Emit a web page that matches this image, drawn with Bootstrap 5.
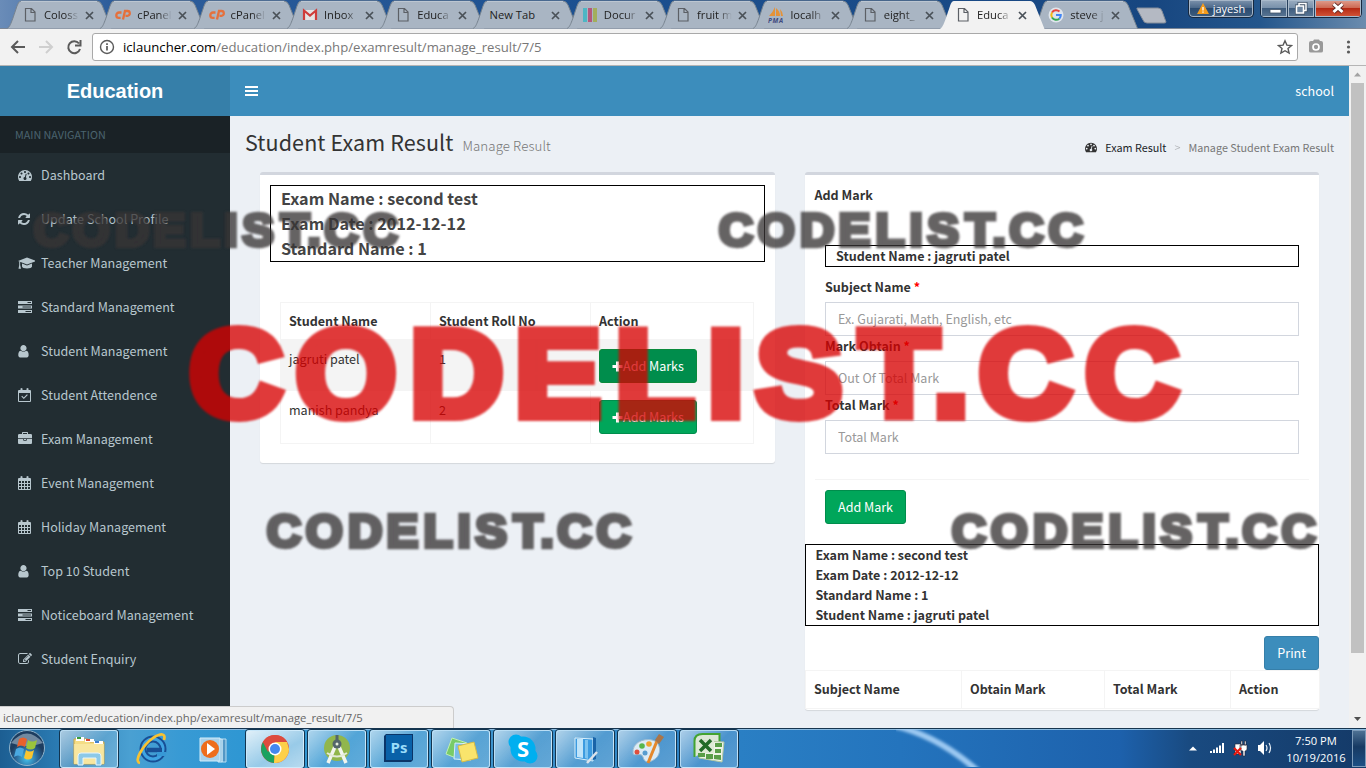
<!DOCTYPE html>
<html lang="en">
<head>
<meta charset="utf-8">
<title>Education</title>
<link href="https://cdn.jsdelivr.net/npm/bootstrap@5.3.0/dist/css/bootstrap.min.css" rel="stylesheet">
<style>
body{width:1366px;height:768px;overflow:hidden;font-family:"Noto Sans CJK SC","Open Sans",sans-serif;font-size:12.55px;line-height:20px;color:#333;background:#ecf0f5}
.ui{font-family:"Open Sans","Noto Sans",sans-serif}
svg{display:block;flex:none}
/* browser tabs */
.tabstrip{height:29px;padding-left:7px;background:linear-gradient(90deg,#6a8cb8 0,#2d5d9b 110px,#1c5090 600px,#174680 1150px,#24568c 1260px,#6b8cae 1366px);box-shadow:inset 0 -1px #7b8594}
.tab{width:93.3px;height:29px;flex:none;font-size:11.2px;color:#222}
.tab>.shape{position:absolute;left:0;top:0;width:106px;height:29px}
.tab .fav{width:16px;height:16px;margin-left:15px;margin-top:1px;z-index:1}
.tab .lbl{width:35px;margin-left:6px;white-space:nowrap;overflow:hidden;z-index:1;-webkit-mask-image:linear-gradient(90deg,#000 60%,transparent)}
.tab .x{margin-left:6px;margin-top:1px;z-index:1}
.tab.wide .lbl{width:52px;margin-left:16px;-webkit-mask-image:none}
.tab.wide .x{margin-left:10px}
.tab.on{z-index:3}
.user-pill{width:66px;height:18px;left:1188px;top:0;border:1px solid #16283f;border-top:0;border-radius:0 0 5px 5px;background:linear-gradient(#7d93ad,#4a6788 48%,#2b4b70 50%,#3d5c7e);box-shadow:inset 0 0 0 1px #a6b6c8;color:#fff;font-size:11px;line-height:17px}
.winbtns{left:1260px;top:0;width:102px;height:18px;border:1px solid #16283f;border-top:0;border-radius:0 0 5px 5px;overflow:hidden;box-shadow:inset 0 0 0 1px #a6b6c8}
.winbtns div{background:linear-gradient(#9aacc0,#7790aa 48%,#3f5d7e 50%,#5a7694);width:27px;border-right:1px solid #26405e;box-shadow:inset 0 0 0 1px #a9bacb}
.winbtns .close-w{width:48px;background:linear-gradient(#e0a090,#cd6a54 45%,#b52a14 50%,#d4573a)}
.toolbar{height:37px;background:#f2f2f2;border-bottom:1px solid #b5b5b5}
.omni{width:1206px;height:28px;margin-left:10px;border:1px solid #a9a9a9;border-radius:3px;background:#fff;font-size:13.15px;color:#777;padding-left:6px}
/* page */
.viewport{height:662px}
.side{width:230px;background:#222d32}
.brand{height:50px;background:#367fa9;color:#fff;font:bold 20px "Liberation Sans",Arial,sans-serif;line-height:50px}
.navhead{height:37px;padding-left:15px;background:#1a2226;color:#4b646f;font-size:10.75px;line-height:38px}
.side a{height:44px;padding-left:18px;color:#b8c7ce;text-decoration:none;letter-spacing:.02px}
.side a svg{width:17px;margin-right:6px;fill:#b8c7ce}
.content{width:1119px;background:#ecf0f5}
.topbar{height:50px;background:#3c8dbc;color:#fff;padding:0 15px 0 15px}
.pagehead{height:56px;padding:0 15px 0 15px}
.pagehead h1{font-size:21.5px;line-height:24px;font-weight:400;letter-spacing:.1px}
.pagehead h1 small{font-size:13.3px;font-weight:300;color:#777;padding-left:4px}
.crumb{font-size:10.8px;color:#777;padding-top:6px}
.panel{background:#fff;border-top:3px solid #d2d6de;border-radius:3px;box-shadow:0 1px 1px rgba(0,0,0,.1)}
.p-left{width:515px;height:291px;margin-left:30px;padding:10px 10px}
.p-right{width:514px;height:538px;margin-left:30px}
.framed{border:1px solid #000;font-weight:700;padding-left:10px}
.grid-t{border-collapse:collapse;table-layout:fixed;margin:0}
.grid-t td,.grid-t th{border:1px solid #f4f4f4;padding:8px;line-height:20px;vertical-align:top}
.semi{font-weight:700}
.btn-flat2{height:34px;border-radius:3px;padding:0 12px;font-size:12.55px;line-height:20px;color:#fff;--bs-btn-color:#fff}
.gbtn{background:#00a65a;border-color:#008d4c}
.gbtn.hov{background:#008d4c;border-color:#0a8a3c}
.pbtn{background:#3c8dbc;border-color:#367fa9}
.fld{height:34px;border:1px solid #d2d6de;border-radius:0;padding:5px 12px 7px;font-size:12.5px;line-height:20px}
.fld::placeholder{color:#999}
.lab{height:25px;line-height:20px}
.star{color:red}
.sbar{width:17px;background:#f1f1f1}
.lead-box{height:77px;font-size:16.2px;line-height:25px;color:#444}
.list-t{width:474px;margin:40px 0 0 10px}
.c1{width:150px}.c2{width:160px}.c3{width:163px}
.r0{height:37px}.r1{height:51px;background:#f4f4f4}.r2{height:52px}
.list-t td{padding-top:9px}
.list-t td.bc{padding:9px 8px 8px}
.list-t .r1 td,.list-t .r2 td{border-top:0;border-bottom:0}.list-t .r2 td{border-bottom:1px solid #f4f4f4}
.amark{padding:10px 0 0 9.5px}
.formpart{padding:40px 20px 0 20px}
.one{height:22px;line-height:20px;margin-bottom:10px}
.foot{margin:25px 10px 0;border-top:1px solid #f4f4f4;padding:10px 10px 0;height:65px}
.four{height:82px;line-height:20px;padding-left:9.5px}
.prt{margin-top:10px}
.res-t{width:514px}
.res-t tr{height:38px}
.d1{width:156px}.d2{width:143px}.d3{width:126px}.d4{width:89px}
.status{left:0;top:706px;width:454px;height:22px;background:#f1f1f1;border:1px solid #ccc;border-left:0;border-bottom:0;border-radius:0 4px 0 0;color:#666;font-size:11.3px;line-height:22px;padding-left:3px;z-index:2}
/* taskbar */
.taskbar{height:40px;background:linear-gradient(90deg,#1c5e92 0,#2b7cb4 60px,#4aa0d2 130px,#389ad4 180px,#2f97d3 240px,#3c93cd 500px,#2a7fc4 740px,#2474bd 900px,#1d61ac 1120px,#194a80 1190px,#143a68 1366px);border-top:1px solid #17354f;box-shadow:inset 0 1px #8bbbe0;z-index:2}
.tb{width:58px;height:38px;margin:1px 4px 0 0;flex:none}
.tb.run{border:1px solid rgba(215,240,255,.75);border-radius:3px;background:linear-gradient(135deg,rgba(255,255,255,.6),rgba(255,255,255,.15) 55%,rgba(255,255,255,.22));box-shadow:0 0 0 1px #12344f}
.tb.act{background:linear-gradient(150deg,rgba(255,255,255,.85),rgba(255,255,255,.5) 60%,rgba(255,255,255,.65))}
.clock{left:1281px;top:3px;color:#fff;font-size:11.2px;line-height:17px;width:70px}
.tray{left:1180px}
.peek{right:0;top:1px;width:14px;height:37px;border:1px solid #7d9bb9;background:linear-gradient(#4e7193,#173a63 45%,#1d4f84)}
.marks{left:0;top:0;z-index:9;pointer-events:none}
</style>
</head>
<body>
<svg width="0" height="0" class="position-absolute">
<defs>
<symbol id="page" viewBox="0 0 16 16"><path d="M3.5 1.5h6l3.5 3.5v9H3.500z M9 1.500v4h4" fill="none" stroke="#5c6066" stroke-width="1.2"/></symbol>
<symbol id="cp" viewBox="0 0 16 16"><path d="M6.500 5.500H4a2.600 2.600 0 0 0 0 5.400h1.600M8 12.500L10 4h2.300a2.300 2.300 0 0 1 .2 4.800H10.500" fill="none" stroke="#e5703c" stroke-width="2.300"/></symbol>
<symbol id="cross" viewBox="0 0 9 9"><path d="M1 1l7 7M8 1L1 8" stroke="#4a5158" stroke-width="1.700"/></symbol>
<symbol id="tabshape" viewBox="0 0 106 29"><path d="M0 28.500C3 27 4 24 10 6Q11.500 1 14 1H90Q93 1 95 5L104.500 28.500" fill="#a9b5c3" stroke="#77838f"/><path d="M14 1.500H90" stroke="#bcc6d1"/></symbol>
<symbol id="tabon" viewBox="0 0 106 29"><path d="M0 29C3 27 4 24 10 6Q11.500 1 14 1H90Q93 1 95 5L104.500 29" fill="#f2f2f2"/></symbol>
<symbol id="tach" viewBox="0 0 1792 1792"><path d="M384 1152q0-53-37.500-90.500t-90.500-37.500-90.500 37.500-37.500 90.500 37.500 90.500 90.500 37.500 90.500-37.500 37.500-90.500zm192-448q0-53-37.500-90.500t-90.500-37.500-90.500 37.500-37.500 90.500 37.500 90.500 90.500 37.500 90.500-37.500 37.500-90.500zm428 481l101-382q6-26-7.500-48.500t-38.500-29.500-48 6.500-30 39.500l-101 382q-60 5-107 43.500t-63 98.500q-20 77 20 146t117 89 146-20 89-117q16-60-6-117t-72-91zm660-33q0-53-37.500-90.500t-90.500-37.500-90.500 37.500-37.500 90.500 37.500 90.500 90.500 37.500 90.500-37.500 37.500-90.500zm-640-640q0-53-37.500-90.500t-90.500-37.500-90.500 37.500-37.500 90.500 37.500 90.500 90.500 37.500 90.500-37.500 37.500-90.500zm448 192q0-53-37.500-90.500t-90.500-37.500-90.500 37.500-37.500 90.500 37.500 90.500 90.500 37.500 90.500-37.500 37.500-90.500zm320 448q0 261-141 483-19 29-54 29h-1402q-35 0-54-29-141-221-141-483 0-182 71-348t191-286 286-191 348-71 348 71 286 191 191 286 71 348z"/></symbol>
<symbol id="refresh" viewBox="0 0 1792 1792"><path d="M1639 1056q0 5-1 7-64 268-268 434.500t-478 166.500q-146 0-282.500-55t-243.500-157l-129 129q-19 19-45 19t-45-19-19-45v-448q0-26 19-45t45-19h448q26 0 45 19t19 45-19 45l-137 137q71 66 161 102t187 36q134 0 250-65t186-179q11-17 53-117 8-23 30-23h192q13 0 22.500 9.500t9.500 22.500zm25-800v448q0 26-19 45t-45 19h-448q-26 0-45-19t-19-45 19-45l138-138q-148-137-349-137-134 0-250 65t-186 179q-11 17-53 117-8 23-30 23h-199q-13 0-22.500-9.500t-9.500-22.500v-7q65-268 270-434.500t480-166.500q146 0 284 55.500t245 156.500l130-129q19-19 45-19t45 19 19 45z" transform="translate(-128)"/></symbol>
<symbol id="cap" viewBox="0 0 18 14"><path d="M9 1.500L0 5l9 3.500L18 5zM4 7.600V10.500c0 1 2.300 2 5 2s5-1 5-2V7.600L9 9.600zM1.200 5.800h1L2.200 9l.8 3.800H.5L1.200 9z"/></symbol>
<symbol id="bars3" viewBox="0 0 14 14"><path fill-rule="evenodd" d="M0 1h14v3H0zM9.500 2v1H13V2zM0 5.500h14v3H0zM4.500 6.500v1H13v-1zM0 10h14v3H0zM7.500 11v1H13v-1z"/></symbol>
<symbol id="user" viewBox="0 0 1536 1792"><path d="M1280 1399q0 109-62.500 187t-150.500 78h-854q-88 0-150.500-78t-62.500-187q0-85 8.500-160.500t31.500-152 58.500-131 94-89 134.500-34.500q131 128 313 128t313-128q76 0 134.500 34.500t94 89 58.500 131 31.500 152 8.500 160.500zm-256-887q0 159-112.500 271.500t-271.500 112.500-271.500-112.500-112.500-271.500 112.500-271.500 271.500-112.500 271.500 112.500 112.500 271.500z"/></symbol>
<symbol id="calc" viewBox="0 0 14 14"><path fill-rule="evenodd" d="M1 2h1.500V.5Q3.500-.4 4.500.500V2h4V.500Q9.500-.4 10.500.500V2H12q1 0 1 1v10q0 1-1 1H1q-1 0-1-1V3q0-1 1-1zM1 5v8h11V5zM3.300 8.600l.8-.8 1.700 1.700 3.200-3.200.8.800-4 4z"/></symbol>
<symbol id="cal" viewBox="0 0 14 14"><path fill-rule="evenodd" d="M1 2h1.500V.5Q3.500-.4 4.500.500V2h4V.500Q9.500-.4 10.500.500V2H12q1 0 1 1v10q0 1-1 1H1q-1 0-1-1V3q0-1 1-1zM1 5v2h2V5zM4 5v2h2V5zM7 5v2h2V5zM10 5v2h2V5zM1 8v2h2V8zM4 8v2h2V8zM7 8v2h2V8zM10 8v2h2V8zM1 11v2h2v-2zM4 11v2h2v-2zM7 11v2h2v-2zM10 11v2h2v-2z"/></symbol>
<symbol id="brief" viewBox="0 0 1792 1792"><path d="M640 256h512v-128h-512v128zm1152 640v480q0 66-47 113t-113 47h-1472q-66 0-113-47t-47-113v-480h672v160q0 26 19 45t45 19h320q26 0 45-19t19-45v-160h672zm-768 0v128h-256v-128h256zm768-480v384h-1792v-384q0-66 47-113t113-47h352v-160q0-40 28-68t68-28h576q40 0 68 28t28 68v160h352q66 0 113 47t47 113z"/></symbol>
<symbol id="edit" viewBox="0 0 1792 1792"><path d="M888 1184l116-116-152-152-116 116v56h96v96h56zm440-720q-16-16-33 1l-350 350q-17 17-1 33t33-1l350-350q17-17 1-33zm80 594v190q0 119-84.500 203.500t-203.500 84.500h-832q-119 0-203.500-84.500t-84.500-203.500v-832q0-119 84.500-203.500t203.500-84.500h832q63 0 117 25 15 7 18 23 3 17-9 29l-49 49q-14 14-32 8-23-6-45-6h-832q-66 0-113 47t-47 113v832q0 66 47 113t113 47h832q66 0 113-47t47-113v-126q0-13 9-22l64-64q15-15 35-7t20 29zm-96-738l288 288-672 672h-288v-288zm444 132l-92 92-288-288 92-92q28-28 68-28t68 28l152 152q28 28 28 68t-28 68z"/></symbol>
<symbol id="plus" viewBox="0 0 11 11"><path d="M4 .5h3V4h3.500v3H7v3.500H4V7H.500V4H4z" fill="#fff"/></symbol>
</defs></svg>

<div class="tabstrip ui d-flex position-relative">
 <div class="tab d-flex align-items-center position-relative"><svg class="shape"><use href="#tabshape"/></svg><svg class="fav"><use href="#page"/></svg><span class="lbl">Coloss</span><svg class="x" width="9" height="9"><use href="#cross"/></svg></div>
 <div class="tab d-flex align-items-center position-relative"><svg class="shape"><use href="#tabshape"/></svg><svg class="fav"><use href="#cp"/></svg><span class="lbl">cPanel</span><svg class="x" width="9" height="9"><use href="#cross"/></svg></div>
 <div class="tab d-flex align-items-center position-relative"><svg class="shape"><use href="#tabshape"/></svg><svg class="fav"><use href="#cp"/></svg><span class="lbl">cPanel</span><svg class="x" width="9" height="9"><use href="#cross"/></svg></div>
 <div class="tab d-flex align-items-center position-relative"><svg class="shape"><use href="#tabshape"/></svg><svg class="fav" viewBox="0 0 16 16"><path d="M2 3h12v10H2z" fill="#e4e4e4"/><path d="M2 13V3.500l6 5 6-5V13" fill="none" stroke="#cf3c3a" stroke-width="2.200"/></svg><span class="lbl">Inbox</span><svg class="x" width="9" height="9"><use href="#cross"/></svg></div>
 <div class="tab d-flex align-items-center position-relative"><svg class="shape"><use href="#tabshape"/></svg><svg class="fav"><use href="#page"/></svg><span class="lbl">Educa</span><svg class="x" width="9" height="9"><use href="#cross"/></svg></div>
 <div class="tab wide d-flex align-items-center position-relative"><svg class="shape"><use href="#tabshape"/></svg><span class="lbl">New Tab</span><svg class="x" width="9" height="9"><use href="#cross"/></svg></div>
 <div class="tab d-flex align-items-center position-relative"><svg class="shape"><use href="#tabshape"/></svg><svg class="fav" viewBox="0 0 16 16"><path d="M1 1h4v14H1z" fill="#4db6c4"/><path d="M6 1h4v14H6z" fill="#b3587c"/><path d="M11 1h4v14h-4z" fill="#a3ae5c"/></svg><span class="lbl">Docur</span><svg class="x" width="9" height="9"><use href="#cross"/></svg></div>
 <div class="tab d-flex align-items-center position-relative"><svg class="shape"><use href="#tabshape"/></svg><svg class="fav"><use href="#page"/></svg><span class="lbl">fruit m</span><svg class="x" width="9" height="9"><use href="#cross"/></svg></div>
 <div class="tab d-flex align-items-center position-relative"><svg class="shape"><use href="#tabshape"/></svg><svg class="fav" viewBox="0 0 16 16"><path d="M7 0v9H1Q5 5 7 0zM8 1q4 3 4 8H8zM12 2q3 3 3 7h-2z" fill="#e59238"/><text x="0" y="15.500" font-size="6.500" font-weight="700" font-style="italic" fill="#3f4a80" textLength="15">PMA</text></svg><span class="lbl">localh</span><svg class="x" width="9" height="9"><use href="#cross"/></svg></div>
 <div class="tab d-flex align-items-center position-relative"><svg class="shape"><use href="#tabshape"/></svg><svg class="fav"><use href="#page"/></svg><span class="lbl">eight_</span><svg class="x" width="9" height="9"><use href="#cross"/></svg></div>
 <div class="tab on d-flex align-items-center position-relative"><svg class="shape"><use href="#tabon"/></svg><svg class="fav"><use href="#page"/></svg><span class="lbl">Educa</span><svg class="x" width="9" height="9"><use href="#cross"/></svg></div>
 <div class="tab d-flex align-items-center position-relative"><svg class="shape"><use href="#tabshape"/></svg><svg class="fav" viewBox="0 0 16 16"><circle cx="8" cy="8" r="7.500" fill="#dfe5ec"/><path d="M4 5.500A5 5 0 0 1 11.500 4.500" stroke="#e8453c" stroke-width="2" fill="none"/><path d="M4 5.500A5 5 0 0 0 4 10.500" stroke="#f5b914" stroke-width="2" fill="none"/><path d="M4 10.500A5 5 0 0 0 11.300 11.700" stroke="#34a853" stroke-width="2" fill="none"/><path d="M8 8h4.800A5 5 0 0 1 11.300 11.700" stroke="#4285f4" stroke-width="2" fill="none"/></svg><span class="lbl">steve j</span><svg class="x" width="9" height="9"><use href="#cross"/></svg></div>
 <svg width="40" height="29" class="ms-2"><path d="M2 8h21q3 0 4 3l4 11q0 1-2 1H12q-3 0-4-3L2 9z" fill="#b4b9c3" stroke="#838c9a"/></svg>
 <div class="user-pill position-absolute d-flex align-items-center justify-content-center gap-1"><svg width="12" height="11"><path d="M6 0l6 11H0z" fill="#f49b1c"/><path d="M6 4v3.500M6 8.500v1.200" stroke="#fff" stroke-width="1.300"/></svg><span>jayesh</span></div>
 <div class="winbtns position-absolute d-flex">
  <div><svg width="27" height="18"><path d="M9 9.500h11v3.500H9z" fill="#fff" stroke="#44566b" stroke-width=".8"/></svg></div>
  <div><svg width="27" height="18"><path d="M11 3.500h7v7h-7zM8.500 6h7v7h-7z" fill="#6d87a2" stroke="#3b4c60" stroke-width="3"/><path d="M11 3.500h7v7h-7z" fill="none" stroke="#fff" stroke-width="1.500"/><path d="M8.500 6h7v7h-7z" fill="#6d87a2" stroke="#fff" stroke-width="1.600"/></svg></div>
  <div class="close-w"><svg width="46" height="18"><path d="M18.500 4l9 8M27.500 4l-9 8" stroke="#5e2a26" stroke-width="4.500"/><path d="M18.500 4l9 8M27.500 4l-9 8" stroke="#fff" stroke-width="3"/></svg></div>
 </div>
</div>

<div class="toolbar d-flex align-items-center">
 <svg width="82" height="36" fill="none" stroke="#5a5a5a" stroke-width="2"><path d="M25 18H12.500M18 12l-6 6 6 6"/><path d="M39 18h12.500M46 12l6 6-6 6" stroke="#cfcfcf"/><path d="M79 14.500A6 6 0 1 0 80 20M80.500 11v5.500H75"/></svg>
 <div class="omni ui d-flex align-items-center"><svg width="16" height="16"><circle cx="8" cy="8" r="6.500" fill="none" stroke="#5a5a5a" stroke-width="1.400"/><path d="M8 7v4.500M8 4.300v1.600" stroke="#5a5a5a" stroke-width="1.700"/></svg><span class="url ps-1 ms-1"><span class="text-black">iclauncher.com</span>/education/index.php/examresult/manage_result/7/5</span>
 <svg width="16" height="16" class="ms-auto me-1"><path d="M8 1.800l1.900 4.300 4.600.4-3.500 3 1.100 4.600L8 11.700l-4.100 2.400L5 9.500l-3.500-3 4.600-.4z" fill="none" stroke="#5a5a5a" stroke-width="1.400"/></svg></div>
 <svg width="60" height="36"><path d="M11 14q0-2 2-2h2l1-1.500h5l1 1.500h1q2 0 2 2v8q0 1.500-2 1.500H13q-2 0-2-1.500z" fill="#999"/><circle cx="18" cy="18" r="3" fill="none" stroke="#fff" stroke-width="1.700"/><g fill="#5a5a5a"><circle cx="50.500" cy="13" r="1.600"/><circle cx="50.500" cy="18" r="1.600"/><circle cx="50.500" cy="23" r="1.600"/></g></svg>
</div>

<div class="viewport d-flex">
 <aside class="side d-flex flex-column">
  <div class="brand text-center">Education</div>
  <div class="navhead">MAIN NAVIGATION</div>
  <a href="#" class="d-flex align-items-center"><svg height="14" viewBox="0 0 17 14"><use href="#tach" width="14" height="14"/></svg>Dashboard</a>
  <a href="#" class="d-flex align-items-center"><svg height="14" viewBox="0 0 17 14"><use href="#refresh" width="14" height="14"/></svg>Update School Profile</a>
  <a href="#" class="d-flex align-items-center"><svg height="14" viewBox="0 0 17 14"><use href="#cap" width="18" height="14"/></svg>Teacher Management</a>
  <a href="#" class="d-flex align-items-center"><svg height="14" viewBox="0 0 17 14"><use href="#bars3" width="14" height="14"/></svg>Standard Management</a>
  <a href="#" class="d-flex align-items-center"><svg height="14" viewBox="0 0 17 14"><use href="#user" width="13" height="14.500"/></svg>Student Management</a>
  <a href="#" class="d-flex align-items-center"><svg height="14" viewBox="0 0 17 14"><use href="#calc" width="14" height="14"/></svg>Student Attendence</a>
  <a href="#" class="d-flex align-items-center"><svg height="14" viewBox="0 0 17 14"><use href="#brief" width="14" height="14"/></svg>Exam Management</a>
  <a href="#" class="d-flex align-items-center"><svg height="14" viewBox="0 0 17 14"><use href="#cal" width="14" height="14"/></svg>Event Management</a>
  <a href="#" class="d-flex align-items-center"><svg height="14" viewBox="0 0 17 14"><use href="#cal" width="14" height="14"/></svg>Holiday Management</a>
  <a href="#" class="d-flex align-items-center"><svg height="14" viewBox="0 0 17 14"><use href="#user" width="13" height="14.500"/></svg>Top 10 Student</a>
  <a href="#" class="d-flex align-items-center"><svg height="14" viewBox="0 0 17 14"><use href="#bars3" width="14" height="14"/></svg>Noticeboard Management</a>
  <a href="#" class="d-flex align-items-center"><svg height="14" viewBox="0 0 17 14"><use href="#edit" width="14" height="14"/></svg>Student Enquiry</a>
 </aside>
 <main class="content">
  <div class="topbar d-flex align-items-center justify-content-between"><svg width="13" height="10"><path d="M0 0h13v2H0zM0 4h13v2H0zM0 8h13v2H0z" fill="#fff"/></svg><span>school</span></div>
  <div class="pagehead d-flex justify-content-between align-items-center"><h1 class="m-0">Student Exam Result <small>Manage Result</small></h1>
   <div class="crumb d-flex align-items-center"><svg width="12" height="12" class="me-2" fill="#333"><use href="#tach"/></svg><span class="text-dark">Exam Result</span><span class="px-2 text-black-50 opacity-50">&gt;</span><span>Manage Student Exam Result</span></div></div>
  <div class="d-flex align-items-start">
   <section class="panel p-left">
    <div class="framed lead-box">Exam Name : second test<br>Exam Date : 2012-12-12<br>Standard Name : 1</div>
    <table class="grid-t list-t"><colgroup><col class="c1"><col class="c2"><col class="c3"></colgroup>
     <tr class="r0"><th class="semi">Student Name</th><th class="semi">Student Roll No</th><th class="semi">Action</th></tr>
     <tr class="r1"><td>jagruti patel</td><td>1</td><td class="bc"><button class="btn btn-flat2 gbtn hov d-flex align-items-center"><svg width="11" height="11"><use href="#plus"/></svg>Add Marks</button></td></tr>
     <tr class="r2"><td>manish pandya</td><td>2</td><td class="bc"><button class="btn btn-flat2 gbtn d-flex align-items-center"><svg width="11" height="11"><use href="#plus"/></svg>Add Marks</button></td></tr>
    </table>
   </section>
   <section class="panel p-right">
    <div class="semi amark">Add Mark</div>
    <div class="formpart">
     <div class="framed semi one">Student Name : jagruti patel</div>
     <div class="semi lab">Subject Name <span class="star">*</span></div>
     <input class="form-control fld" placeholder="Ex. Gujarati, Math, English, etc">
     <div class="semi lab">Mark Obtain <span class="star">*</span></div>
     <input class="form-control fld" placeholder="Out Of Total Mark">
     <div class="semi lab">Total Mark <span class="star">*</span></div>
     <input class="form-control fld" placeholder="Total Mark">
    </div>
    <div class="foot"><button class="btn btn-flat2 gbtn">Add Mark</button></div>
    <div class="framed semi four">Exam Name : second test<br>Exam Date : 2012-12-12<br>Standard Name : 1<br>Student Name : jagruti patel</div>
    <div class="d-flex justify-content-end prt"><button class="btn btn-flat2 pbtn">Print</button></div>
    <table class="grid-t res-t"><colgroup><col class="d1"><col class="d2"><col class="d3"><col class="d4"></colgroup>
     <tr><th class="semi">Subject Name</th><th class="semi">Obtain Mark</th><th class="semi">Total Mark</th><th class="semi">Action</th></tr></table>
   </section>
  </div>
 </main>
 <div class="sbar"><svg width="17" height="662"><path d="M2 17h13v570H2z" fill="#c1c1c1"/><path d="M5 10.500l3.500-4 3.500 4z" fill="#a3a3a3"/><path d="M5 651l3.500 4 3.500-4z" fill="#505050"/></svg></div>
</div>

<div class="status ui position-absolute">iclauncher.com/education/index.php/examresult/manage_result/7/5</div>

<div class="taskbar d-flex align-items-start position-relative">
 <svg width="60" height="39"><defs><radialGradient id="orb" cy=".8"><stop offset="0" stop-color="#45c3ee"/><stop offset=".6" stop-color="#2c6a9c"/><stop offset="1" stop-color="#1d3d60"/></radialGradient></defs><circle cx="27" cy="19" r="17.500" fill="url(#orb)" stroke="#8fb4cc"/><path d="M11 14Q27-5 43 14Q27 20 11 14" fill="#d9e6ef" opacity=".45"/><path d="M19 10q4-3 8 0l-2 8q-4-3-8 0z" fill="#e8612c"/><path d="M28 11q4 3 9 0l-2 8q-4 3-9 0z" fill="#9ac43c"/><path d="M16 20q4-3 8 0l-2 8q-4-3-8 0z" fill="#4aa8e0"/><path d="M26 21q4 3 8 0l-2 8q-4 3-8 0z" fill="#fbc52f"/></svg>
 <div class="tb run"><svg width="56" height="36"><path d="M13 8h14l2 3h14v22H13z" fill="#f4dc85" stroke="#c7a549"/><path d="M15 6h8v4h-8zM24 8h9v3h-9zM33 10h9v3h-9z" fill="#fff"/><path d="M16 6h4v2h-4z" fill="#3b9e3a"/><path d="M25 8h4v2h-4z" fill="#d94632"/><path d="M34 10h4v2h-4z" fill="#3f7fd0"/><path d="M13 13h30v20H13z" fill="#f9e9a5" opacity=".8"/><path d="M17 34V25q0-3 3-3h17q3 0 3 3v9h-5v-7H22v7z" fill="#8cc9e8" stroke="#e5f5fd"/></svg></div>
 <div class="tb"><svg width="58" height="38"><circle cx="31" cy="19" r="10" fill="none" stroke="#184f95" stroke-width="7"/><circle cx="31" cy="19" r="10" fill="none" stroke="#3fa4e2" stroke-width="3"/><path d="M25 20h15" stroke="#184f95" stroke-width="4.500"/><path d="M35 22h9v4h-9z" fill="#3798d5"/><path d="M18 33c-7-1 3-18 13-25 8-5 13-5 11 2" fill="none" stroke="#f7c232" stroke-width="2.700"/></svg></div>
 <div class="tb"><svg width="58" height="38"><path d="M38 9h4v23h-4z" fill="#5397c5" stroke="#b9def2"/><path d="M34 9h4v23h-4z" fill="#7db6da" stroke="#d2edfa"/><path d="M16 8h20v23H16z" fill="#a7d1eb" stroke="#d2edfa"/><circle cx="26" cy="19" r="9" fill="#ee6d1c"/><path d="M23 13l8 6-8 6z" fill="#fff"/></svg></div>
 <div class="tb run act"><svg width="56" height="36"><circle cx="28" cy="18" r="14" fill="#dd4b3e"/><path d="M28 18L16 11A14 14 0 0 0 27 32z" fill="#1aa261"/><path d="M28 18h14A14 14 0 0 1 27 32z" fill="#fdd04a"/><path d="M28 11h12l2 7-6 6z" fill="#fdd04a"/><path d="M15.900 11A14 14 0 0 1 40.200 11H28l-7 10z" fill="#dd4b3e"/><circle cx="28" cy="18" r="6.500" fill="#fff"/><circle cx="28" cy="18" r="5" fill="#4587f0"/></svg></div>
 <div class="tb run"><svg width="56" height="36"><circle cx="28" cy="17" r="13" fill="#91b64c"/><path d="M28 11L19 32M28 11l9 21" stroke="#f2f5ed" stroke-width="3.500"/><circle cx="28" cy="13" r="4.500" fill="#54666b"/><circle cx="28" cy="13" r="1.500" fill="#e7eedb"/><path d="M28 4v5" stroke="#54666b" stroke-width="3"/><path d="M18 22q10 7 20 0" fill="none" stroke="#e3ead8" stroke-width="2"/></svg></div>
 <div class="tb run"><svg width="56" height="36"><path d="M13 5l2-2h27v26l-2 2H13z" fill="#0a3568"/><path d="M15 4h26v25H15z" fill="#0961a8"/><text x="28" y="22" text-anchor="middle" font-family="Open Sans" font-weight="700" font-size="15" fill="#9adcf9">Ps</text></svg></div>
 <div class="tb run"><svg width="56" height="36"><path d="M19 7l15 5-6 17-15-6z" fill="#78cb68" stroke="#c1f0b2"/><path d="M22 12l17 1-1 16-17-1z" fill="#79bce8" stroke="#d6effc"/><path d="M25 15l16-4 4 16-16 4z" fill="#f9e46c" stroke="#d6ba44"/></svg></div>
 <div class="tb run"><svg width="56" height="36"><circle cx="28" cy="18" r="12.500" fill="#00aff0"/><circle cx="21" cy="11" r="7.500" fill="#00aff0"/><circle cx="35" cy="25" r="7.500" fill="#00aff0"/><text x="28" y="26" text-anchor="middle" font-family="Open Sans" font-weight="700" font-size="22" fill="#fff">S</text></svg></div>
 <div class="tb run"><svg width="56" height="36"><path d="M18 7l18 1v22l-18-3z" fill="#3c9be0" stroke="#d9f0fc"/><path d="M20 8h6v19l-6-1z" fill="#bfe4fa"/><path d="M28 9h3v19l-3-1z" fill="#7cc3f0"/><path d="M36 6l3 1v21l-3 1z" fill="#1964a8"/><path d="M30 32l10-11" stroke="#dde3ea" stroke-width="2.500"/></svg></div>
 <div class="tb run"><svg width="56" height="36"><path d="M14 22C13 12 24 7 33 9s10 14 3 19-11 3-12-2-10 0-10-4z" fill="#dcebf5" stroke="#9dbbd0"/><circle cx="18" cy="21" r="2.500" fill="#e04e3c"/><circle cx="23" cy="15" r="2.800" fill="#58b64b"/><circle cx="30" cy="13" r="2.800" fill="#f1a32e"/><circle cx="26" cy="22" r="2.500" fill="#579dd0"/><path d="M29 32l9-22" stroke="#e4882c" stroke-width="3"/><path d="M36 9l4-6 5 3-5 7z" fill="#a97549"/></svg></div>
 <div class="tb run"><svg width="56" height="36"><path d="M13.500 26V10q0-7 8-7h17v10" fill="#dce7d6" stroke="#43a331" stroke-width="2"/><path d="M20 10l23 1-2 20-23-4z" fill="#edf3e6" stroke="#b2c8a1"/><path d="M17 10h16v12H17z" fill="#dfead7"/><path d="M34 12h7v4h-7zM34 18h6v4h-6zM33 24h7v5l-7-1zM17 22h7v4h-7zM25 23h7v5h-7z" fill="#599e49"/><path d="M19 9l11 11M30 9L19 20" stroke="#236b28" stroke-width="3.500"/></svg></div>
 <svg width="470" height="38" viewBox="0 0 470 38" class="ms-auto"><defs><filter id="s1"><feGaussianBlur stdDeviation="1.500"/></filter></defs><path d="M-5 -4Q42 6 84 44" stroke="#9cc9f2" stroke-width="6" fill="none" filter="url(#s1)"/></svg>
 <svg width="96" height="38" class="position-absolute top-0 tray"><path d="M9 21.500l4-4 4 4z" fill="#fff"/><path d="M30 22h2v2h-2zM33 20.500h2V24h-2zM36 18.500h2V24h-2zM39 16.500h2V24h-2zM42 14h2V24h-2z" fill="#fff"/><path d="M55 15h6v10h-6zM60 16h7v4q0 2-2 2v5h-2v-5q-3 0-3-2zM61 12h1.500v4H61zM64.500 12H66v4h-1.500z" fill="#fff" stroke="#223" stroke-width=".6"/><path d="M54 19l7 7M61 19l-7 7" stroke="#e8190f" stroke-width="2.200"/><path d="M78 16h2l4-4v14l-4-4h-2z" fill="#fff"/><path d="M86 16q2 3 0 6M89 14q3 5 0 10" stroke="#e8f0f8" fill="none" stroke-width="1.200"/></svg>
 <div class="clock ui text-center position-absolute">7:50 PM<br>10/19/2016</div>
 <div class="peek position-absolute"></div>
</div>

<svg class="marks position-absolute" width="1366" height="768" font-family="Liberation Sans" font-weight="700" font-size="122">
 <defs><filter id="soft" filterUnits="userSpaceOnUse" x="-10" y="280" width="1300" height="180"><feGaussianBlur stdDeviation="2.600"/></filter>
 <filter id="soft1" filterUnits="userSpaceOnUse" x="100" y="280" width="1200" height="180"><feGaussianBlur stdDeviation=".9"/></filter></defs>
 <g fill="#383436" stroke="#383436" stroke-width="12">
  <g opacity=".77" transform="translate(-36 87.500) scale(.3902 .381)"><text filter="url(#soft)" y="416.500" x="178.500 279 386.700 485.700 580.500 667.700 713.300 810.900 880.200 923.400 1023.800">CODELIST.CC</text></g>
  <g opacity=".77" transform="translate(649 87.500) scale(.3902 .381)"><text filter="url(#soft)" y="416.500" x="178.500 279 386.700 485.700 580.500 667.700 713.300 810.900 880.200 923.400 1023.800">CODELIST.CC</text></g>
  <g opacity=".77" transform="translate(197 388.500) scale(.3902 .381)"><text filter="url(#soft)" y="416.500" x="178.500 279 386.700 485.700 580.500 667.700 713.300 810.900 880.200 923.400 1023.800">CODELIST.CC</text></g>
  <g opacity=".77" transform="translate(882 388.500) scale(.3902 .381)"><text filter="url(#soft)" y="416.500" x="178.500 279 386.700 485.700 580.500 667.700 713.300 810.900 880.200 923.400 1023.800">CODELIST.CC</text></g>
 </g>
 <g opacity=".77" fill="#d80002" stroke="#d80002" stroke-width="10" transform="scale(1.06 1)"><text filter="url(#soft1)" y="416.500" x="178.500 279 386.700 485.700 580.500 667.700 713.300 810.900 880.200 923.400 1023.800">CODELIST.CC</text></g>
</svg>
<script src="https://cdn.jsdelivr.net/npm/bootstrap@5.3.0/dist/js/bootstrap.bundle.min.js"></script>
</body>
</html>
